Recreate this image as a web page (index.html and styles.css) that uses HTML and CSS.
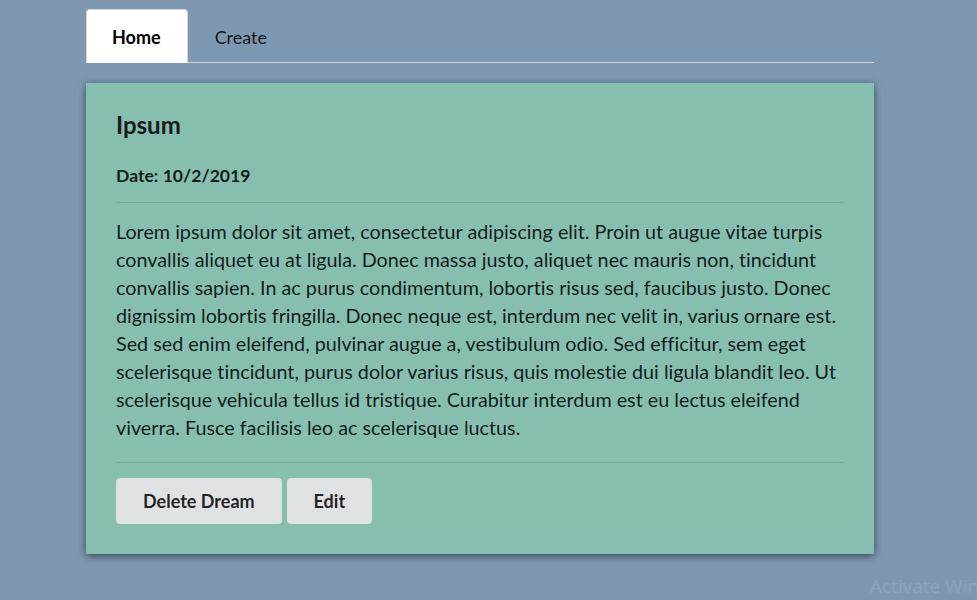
FILE: index.html
```html
<!DOCTYPE html>
<html>
<head>
<meta charset="utf-8">
<link rel="stylesheet" href="styles.css">
</head>
<body>
<div class="container">
  <nav class="tabs">
    <a class="tab active">Home</a>
    <a class="tab">Create</a>
  </nav>
  <section class="card">
    <h2 class="title">Ipsum</h2>
    <p class="date">Date: 10/2/2019</p>
    <hr class="divider">
    <p class="body">Lorem ipsum dolor sit amet, consectetur adipiscing elit. Proin ut augue vitae turpis convallis aliquet eu at ligula. Donec massa justo, aliquet nec mauris non, tincidunt convallis sapien. In ac purus condimentum, lobortis risus sed, faucibus justo. Donec dignissim lobortis fringilla. Donec neque est, interdum nec velit in, varius ornare est. Sed sed enim eleifend, pulvinar augue a, vestibulum odio. Sed efficitur, sem eget scelerisque tincidunt, purus dolor varius risus, quis molestie dui ligula blandit leo. Ut scelerisque vehicula tellus id tristique. Curabitur interdum est eu lectus eleifend viverra. Fusce facilisis leo ac scelerisque luctus.</p>
    <hr class="divider">
    <div class="actions">
      <button class="btn">Delete Dream</button>
      <button class="btn">Edit</button>
    </div>
  </section>
</div>
<div class="watermark">Activate Windows</div>
</body>
</html>
```
FILE: styles.css
```css
html, body {
  margin: 0;
  padding: 0;
}
body {
  background: #7f98b2;
  font-family: Lato, "Open Sans", sans-serif;
  color: rgba(0, 0, 0, 0.87);
  height: 600px;
  overflow: hidden;
  position: relative;
}
.container {
  width: 788px;
  margin-left: 86px;
  padding-top: 9px;
}
.tabs {
  display: flex;
  border-bottom: 1px solid #d4d4d5;
  height: 53px;
}
.tab {
  display: flex;
  align-items: center;
  padding: 1px 27px 0 26px;
  font-size: 18px;
  color: rgba(0, 0, 0, 0.87);
  border: 1px solid transparent;
  border-bottom: none;
  border-radius: 4px 4px 0 0;
  margin-bottom: -1px;
}
.tab.active {
  background: #fff;
  border-color: #d4d4d5;
  font-weight: 700;
  color: #000;
  padding: 1px 26px 0 25px;
}
.card {
  margin-top: 20px;
  background: #86bfb0;
  padding: 27px 30px 30px;
  box-shadow: 0 2px 8px rgba(0, 0, 0, 0.55);
}
.title {
  margin: 0;
  font-size: 24px;
  font-weight: 700;
  line-height: 30px;
}
.date {
  margin: 25px 0 0;
  font-size: 17.6px;
  font-weight: 700;
  line-height: 22px;
}
.divider {
  border: none;
  border-top: 1px solid rgba(0, 0, 0, 0.1);
  margin: 15px 0 0;
}
.body {
  margin: 15px 0 20px;
  font-size: 19.75px;
  line-height: 28px;
  font-variant-ligatures: none;
}
.actions {
  display: flex;
  gap: 5px;
  margin-top: 15px;
}
.btn {
  font-family: Lato, "Open Sans", sans-serif;
  font-size: 18px;
  font-weight: 700;
  color: rgba(0, 0, 0, 0.87);
  background: #e0e1e2;
  border: none;
  border-radius: 4px;
  height: 46px;
  padding: 0 27px;
}
.watermark {
  position: absolute;
  left: 870px;
  top: 573px;
  font-size: 19px;
  color: rgba(255, 255, 255, 0.12);
  white-space: nowrap;
  font-family: "Open Sans", sans-serif;
}
```
